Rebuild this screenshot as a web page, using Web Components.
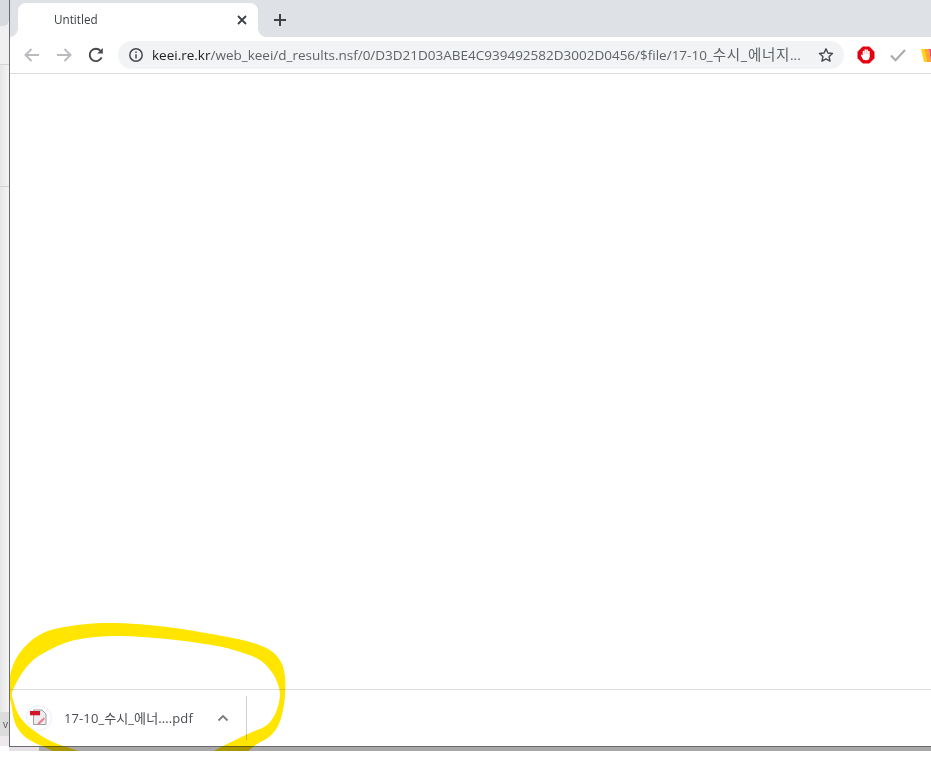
<!DOCTYPE html>
<html lang="ko">
<head>
<meta charset="utf-8">
<title>Untitled</title>
<style>
  html, body { margin: 0; height: 771px; background: #fff; overflow: hidden; }
  body { font-family: "Open Sans", "Noto Sans CJK KR", sans-serif; position: relative; }
</style>
</head>
<body>
<desktop-frame>
  <browser-window>
    <tab-strip slot="tabs" title-text="Untitled"></tab-strip>
    <nav-toolbar slot="toolbar"></nav-toolbar>
    <download-shelf slot="shelf">
      <download-item>17-10_수시_에너....pdf</download-item>
    </download-shelf>
  </browser-window>
</desktop-frame>
<marker-circle></marker-circle>

<script>
const FONT = '"Open Sans", "Noto Sans CJK KR", sans-serif';

class DesktopFrame extends HTMLElement {
  constructor() {
    super();
    this.attachShadow({ mode: 'open' });
    this.shadowRoot.innerHTML = `
      <style>
      :host { display: flex; height: 751px; }
      .edge {
        width: 9px;
        height: 746px;
        flex: none;
        display: flex;
        flex-direction: column;
        background: linear-gradient(90deg, #e6e6e6, #f4f4f4);
        overflow: hidden;
      }
      .top { height: 26px; background: #d8dadd; border-bottom-right-radius: 6px; }
      .gap1 { height: 38px; background: #f0f0f0; border-bottom: 1px solid #d4d4d4; }
      .gap2 { height: 121px; border-bottom: 1px solid #d4d4d4; }
      .gap3 { flex: 1; }
      .task {
        height: 24px;
        background: #dcdcdc;
        font: 10px/24px ${FONT};
        color: #555;
        padding-left: 3px;
      }
      .under { height: 10px; background: #efe9ee; }
      .window { flex: 1; display: flex; flex-direction: column; min-width: 0; }
      .foot { height: 5px; display: flex; }
      .foot b { flex: 1; background: linear-gradient(#6a6a6a 0, #6a6a6a 1px, #a8a8a8 1px); }
      .foot u { width: 30px; background: linear-gradient(#6a6a6a 0, #6a6a6a 1px, #e6e1e6 1px); }
      ::slotted(browser-window) { height: 746px; }
      </style>
      <div class="edge">
        <div class="top"></div>
        <div class="gap1"></div>
        <div class="gap2"></div>
        <div class="gap3"></div>
        <div class="task">v</div>
        <div class="under"></div>
      </div>
      <div class="window">
        <slot></slot>
        <div class="foot"><u></u><b></b></div>
      </div>
    `;
  }
}

class BrowserWindow extends HTMLElement {
  constructor() {
    super();
    this.attachShadow({ mode: 'open' });
    this.shadowRoot.innerHTML = `
      <style>
      :host {
        display: flex;
        flex-direction: column;
        box-sizing: border-box;
        border-left: 1px solid #6a6a6a;
        background: #fff;
      }
      .page { flex: 1; background: #fff; }
      </style>
      <slot name="tabs"></slot>
      <slot name="toolbar"></slot>
      <div class="page"></div>
      <slot name="shelf"></slot>
    `;
  }
}

class TabStrip extends HTMLElement {
  constructor() {
    super();
    this.attachShadow({ mode: 'open' });
    this.shadowRoot.innerHTML = `
      <style>
      :host {
        display: flex;
        align-items: flex-end;
        height: 37px;
        background: #dee1e6;
        padding-left: 8px;
        flex: none;
      }
      .tab {
        position: relative;
        width: 240px;
        height: 34px;
        box-sizing: border-box;
        padding: 0 9px 0 36px;
        background: #fff;
        border-radius: 8px 8px 0 0;
        display: flex;
        align-items: center;
        justify-content: space-between;
        font: 11.7px ${FONT};
        color: #3c4043;
      }
      .label { margin-bottom: 2px; }
      /* little flares at the foot of the active tab */
      .tab::before, .tab::after {
        content: '';
        position: absolute;
        bottom: 0;
        width: 8px;
        height: 8px;
        background: radial-gradient(circle at 0 0, transparent 7.5px, #fff 8px);
      }
      .tab::before { left: -8px; }
      .tab::after { right: -8px; transform: scaleX(-1); }
      .new { margin-left: 14px; height: 34px; display: flex; align-items: center; }
      svg { display: block; }
      </style>
      <div class="tab">
        <span class="label"></span>
        <svg width="14" height="14" viewBox="0 0 14 14"><path d="M3 3l8 8M11 3l-8 8" stroke="#3c4043" stroke-width="1.8" fill="none"/></svg>
      </div>
      <div class="new">
        <svg width="16" height="16" viewBox="0 0 16 16"><path d="M8 2v12M2 8h12" stroke="#3c4043" stroke-width="2" fill="none"/></svg>
      </div>
    `;
  }

  connectedCallback() {
    this.shadowRoot.querySelector('.label').textContent = this.getAttribute('title-text');
  }
}

class NavToolbar extends HTMLElement {
  constructor() {
    super();
    this.attachShadow({ mode: 'open' });
    this.shadowRoot.innerHTML = `
      <style>
      :host {
        display: flex;
        align-items: center;
        height: 37px;
        box-sizing: border-box;
        padding: 4px 0 4px 12px;
        flex: none;
        background: #fff;
        border-bottom: 1px solid #dcdcdc;
        overflow: hidden;
      }
      svg { display: block; flex: none; }
      .nav { display: flex; gap: 12px; width: 96px; flex: none; }
      .omni {
        width: 726px;
        height: 28px;
        flex: none;
        box-sizing: border-box;
        padding: 0 10px 0 10px;
        background: #f1f3f4;
        border-radius: 14px;
        display: flex;
        align-items: center;
      }
      .url {
        flex: 1;
        margin: 0 0 1px 8px;
        font: 13.5px/20px ${FONT};
        color: #5f6368;
        white-space: nowrap;
        overflow: hidden;
      }
      .url b { font-weight: 400; color: #202124; }
      .url i { font-style: normal; font-size: 14.5px; line-height: 1; letter-spacing: .7px; }
      .ext { display: flex; align-items: center; gap: 12px; margin-left: 12px; flex: none; }
      </style>
      <div class="nav">
        <svg width="20" height="20" viewBox="0 0 20 20"><path d="M17 10H4M9.5 4L3.5 10l6 6" stroke="#b9bbbe" stroke-width="1.9" fill="none"/></svg>
        <svg width="20" height="20" viewBox="0 0 20 20"><path d="M3 10h13M10.5 4l6 6-6 6" stroke="#b9bbbe" stroke-width="1.9" fill="none"/></svg>
        <svg width="20" height="20" viewBox="0 0 20 20"><path d="M15.6 12.4A6.2 6.2 0 1 1 14.4 5.6" stroke="#45484c" stroke-width="1.9" fill="none"/><path d="M16.8 3v5.6h-5.6z" fill="#45484c"/></svg>
      </div>
      <div class="omni">
        <svg width="16" height="16" viewBox="0 0 16 16"><circle cx="8" cy="8" r="6.2" stroke="#45484c" stroke-width="1.5" fill="none"/><path d="M8 7.2v4.2M8 4.4v1.6" stroke="#45484c" stroke-width="1.5"/></svg>
        <span class="url"><b>keei.re.kr</b>/web_keei/d_results.nsf/0/D3D21D03ABE4C939492582D3002D0456/$file/17-10_<i>수시_에너지</i>...</span>
        <svg width="16" height="16" viewBox="0 0 16 16"><path d="M8 1.800l1.900 4.200 4.600.5-3.400 3.100.9 4.600L8 11.900l-4 2.300.9-4.600L1.500 6.500l4.600-.5z" stroke="#45484c" stroke-width="1.400" fill="none" stroke-linejoin="round"/></svg>
      </div>
      <div class="ext">
        <svg width="20" height="20" viewBox="0 0 20 20">
          <path d="M6.700 2h6.600L18 6.700v6.600L13.300 18H6.700L2 13.300V6.700z" fill="#e3000f" stroke="#e3000f" stroke-linejoin="round"/>
          <path d="M7.500 6.500V11M9.300 5V10M11.100 5V10M12.900 6.500V11.500" stroke="#fff" stroke-width="1.600" stroke-linecap="round" fill="none"/>
          <path d="M5.800 10.500l2 3.500" stroke="#fff" stroke-width="1.700" stroke-linecap="round" fill="none"/>
          <circle cx="10.200" cy="12" r="3.300" fill="#fff"/>
        </svg>
        <svg width="20" height="20" viewBox="0 0 20 20"><path d="M3 10.500l4.500 4.800L17 5" stroke="#a8aaad" stroke-width="2" fill="none"/></svg>
        <svg width="20" height="20" viewBox="0 0 20 20"><path d="M1 4h4l2 13H4z" fill="#ffd21f"/><path d="M4.500 4h4.500l2 13H7z" fill="#ffa726"/><path d="M9 4h4l2 13h-4z" fill="#f4458c"/></svg>
      </div>
    `;
  }
}

class DownloadShelf extends HTMLElement {
  constructor() {
    super();
    this.attachShadow({ mode: 'open' });
    this.shadowRoot.innerHTML = `
      <style>
      :host {
        display: flex;
        align-items: center;
        height: 57px;
        box-sizing: border-box;
        border-top: 1px solid #dcdcdc;
        background: #fff;
        flex: none;
      }
      </style>
      <slot></slot>
    `;
  }
}

class DownloadItem extends HTMLElement {
  constructor() {
    super();
    this.attachShadow({ mode: 'open' });
    this.shadowRoot.innerHTML = `
      <style>
      :host {
        display: flex;
        align-items: center;
        width: 237px;
        height: 44px;
        box-sizing: border-box;
        padding: 0 0 1px 16px;
        border-right: 1px solid #cfcfcf;
        font: 13px ${FONT};
        letter-spacing: .1px;
        color: #4a4d52;
      }
      .icon { width: 26px; height: 26px; flex: none; display: block; }
      .name { margin-left: 12px; width: 136px; flex: none; white-space: nowrap; }
      .more { display: block; margin-left: 17px; flex: none; }
      </style>
      <svg class="icon" viewBox="0 0 26 26">
        <circle cx="13" cy="13" r="12.300" fill="#fff" stroke="#eef4fd" stroke-width="1.500"/>
        <path d="M7.500 5h8.500l4 4v10.500h-12.500z" fill="#efeded" stroke="#a0a0a0" stroke-width="1"/>
        <path d="M4 6h10v4.300h-10z" fill="#d3142a"/>
        <path d="M12 17.800l5.500-5.300 1.500 1.500-5.200 5-2.300.5z" fill="#ea7f90"/>
      </svg>
      <span class="name"><slot></slot></span>
      <svg class="more" width="12" height="12" viewBox="0 0 12 12"><path d="M1.500 8.500L6 4l4.500 4.500" stroke="#7a7d81" stroke-width="1.800" fill="none"/></svg>
    `;
  }
}

// hand drawn highlight sitting on top of the screenshot
class MarkerCircle extends HTMLElement {
  constructor() {
    super();
    this.attachShadow({ mode: 'open' });
    this.shadowRoot.innerHTML = `
      <style>
      :host {
        position: absolute;
        left: 10px;
        top: 600px;
        width: 921px;
        height: 151px;
        overflow: hidden;
        mix-blend-mode: multiply;
        pointer-events: none;
      }
      svg { display: block; }
      </style>
      <svg width="921" height="151" viewBox="10 600 921 151"><path fill="#ffe500"/></svg>
    `;
    const outer = [
      [55, 752], [42, 746], [33, 742], [23, 735], [15, 723], [11, 703], [8, 687], [17, 657], [41, 634],
      [77, 625], [117, 623], [167, 627], [217, 635], [250, 642], [270, 650], [281, 662], [285, 677],
      [285, 695], [283, 710], [278, 726], [269, 737], [257, 744], [247, 752],
    ];
    const inner = [
      [212, 752], [227, 744], [250, 733], [267, 725], [276, 712], [280, 695], [277, 682], [271, 671],
      [260, 660], [243, 653], [217, 646], [167, 639], [117, 636], [75, 640], [42, 654], [25, 669], [13, 690],
      [13, 700], [20, 717], [33, 730], [53, 742], [82, 752],
    ];
    const d = `${this.smooth(outer)} L${inner[0].join(' ')} ${this.smooth(inner, true)} Z`;
    this.shadowRoot.querySelector('path').setAttribute('d', d);
  }

  // catmull-rom through the traced points
  smooth(points, skipMove) {
    let d = skipMove ? '' : `M${points[0].join(' ')}`;
    for (let i = 0; i < points.length - 1; i++) {
      const p0 = points[i - 1] || points[i];
      const p1 = points[i];
      const p2 = points[i + 1];
      const p3 = points[i + 2] || p2;
      const c1 = [p1[0] + (p2[0] - p0[0]) / 6, p1[1] + (p2[1] - p0[1]) / 6];
      const c2 = [p2[0] - (p3[0] - p1[0]) / 6, p2[1] - (p3[1] - p1[1]) / 6];
      d += ` C${c1.join(' ')} ${c2.join(' ')} ${p2.join(' ')}`;
    }
    return d;
  }
}

customElements.define('desktop-frame', DesktopFrame);
customElements.define('browser-window', BrowserWindow);
customElements.define('tab-strip', TabStrip);
customElements.define('nav-toolbar', NavToolbar);
customElements.define('download-shelf', DownloadShelf);
customElements.define('download-item', DownloadItem);
customElements.define('marker-circle', MarkerCircle);
</script>
</body>
</html>
